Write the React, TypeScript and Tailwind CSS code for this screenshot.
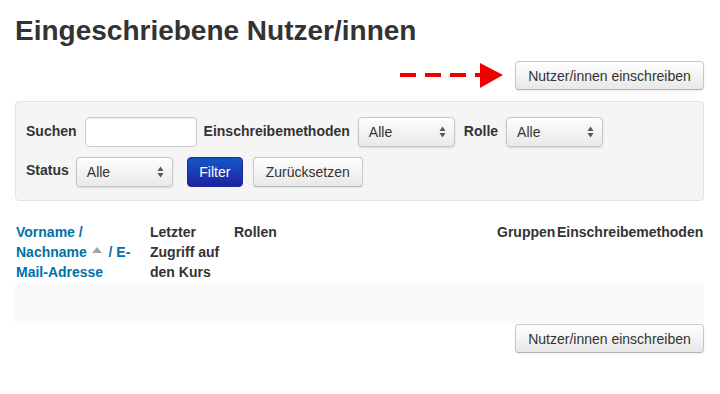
import React from "react";

function Btn({ children, className = "" }: { children: React.ReactNode; className?: string }) {
  return (
    <div
      className={
        "flex items-center justify-center rounded-[4px] border border-[#c8c8c8] border-b-[#b3b3b3] bg-gradient-to-b from-[#ffffff] to-[#e8e8e8] px-[12px] text-[14px] leading-[20px] text-[#333] shadow-[0_1px_2px_rgba(0,0,0,0.08)] " +
        className
      }
    >
      {children}
    </div>
  );
}

function Select({ className = "" }: { className?: string }) {
  return (
    <div
      className={
        "flex h-[30px] w-[97px] items-center justify-between rounded-[4px] border border-[#c6c6c6] bg-gradient-to-b from-[#fdfdfd] to-[#e9e9e9] pl-[10px] pr-[8px] text-[14px] text-[#333] shadow-[0_1px_2px_rgba(0,0,0,0.12)] " +
        className
      }
    >
      <span>Alle</span>
      <svg width="7" height="12" viewBox="0 0 7 12">
        <path d="M3.5 0.5 L6.5 5 L0.5 5 Z" fill="#555" />
        <path d="M3.5 11.5 L6.5 7 L0.5 7 Z" fill="#555" />
      </svg>
    </div>
  );
}

function Arrow() {
  return (
    <svg width="106" height="28" viewBox="0 0 106 28">
      <rect x="1" y="11" width="16" height="4" fill="#ee0000" />
      <rect x="26" y="11" width="16" height="4" fill="#ee0000" />
      <rect x="51" y="11" width="16" height="4" fill="#ee0000" />
      <rect x="76" y="11" width="8" height="4" fill="#ee0000" />
      <path d="M81 1 L104 13 L81 26 Z" fill="#ee0000" />
    </svg>
  );
}

export default function App() {
  return (
    <div className="min-h-[394px] w-[720px] bg-white pl-[15px] pr-[16px] text-[14px] leading-[20px] text-[#333] [font-family:'Liberation_Sans',Arial,sans-serif]">
      <h2 className="mt-[11px] text-[28px] font-bold leading-[40px] text-[#333]">
        Eingeschriebene Nutzer/innen
      </h2>

      <div className="mt-[10px] flex items-center justify-end gap-[10px]">
        <Arrow />
        <Btn className="h-[29px] w-[189px]">Nutzer/innen einschreiben</Btn>
      </div>

      <div className="mt-[11px] rounded-[4px] border border-[#e3e3e3] bg-[#f5f5f5] pb-[13px] pl-[10px] pt-[15px]">
        <div className="flex items-center">
          <span className="mb-[2px] mr-[8px] font-bold">Suchen</span>
          <div className="mr-[7px] h-[30px] w-[112px] rounded-[4px] border border-[#cccccc] bg-white shadow-[inset_0_1px_1px_rgba(0,0,0,0.075)]" />
          <span className="mb-[2px] mr-[8px] font-bold">Einschreibemethoden</span>
          <Select className="mr-[9px]" />
          <span className="mb-[2px] mr-[8px] font-bold">Rolle</span>
          <Select />
        </div>
        <div className="mt-[10px] flex items-center">
          <span className="mb-[4px] mr-[7px] font-bold">Status</span>
          <Select className="mr-[14px]" />
          <div className="mr-[10px] flex h-[30px] w-[56px] items-center justify-center rounded-[4px] border border-[#1c2a95] bg-gradient-to-b from-[#1256c8] to-[#1d1fa0] text-white">
            Filter
          </div>
          <Btn className="h-[30px] w-[110px]">Zurücksetzen</Btn>
        </div>
      </div>

      <div className="mt-[21px] grid grid-cols-[134px_84px_263px_60px_148px] font-bold">
        <div className="pl-[1px] text-[#0070a8]">
          Vorname /<br />
          Nachname{" "}
          <svg width="10" height="6" viewBox="0 0 10 6" className="mb-[6px] ml-[1px] mr-[3px] inline-block">
            <path d="M0 6 L5 0 L10 6 Z" fill="#a6a6a6" />
          </svg>
          {" "}/ E-
          <br />
          Mail-Adresse
        </div>
        <div className="pl-[1px]">
          Letzter
          <br />
          Zugriff auf
          <br />
          den Kurs
        </div>
        <div className="pl-[1px]">Rollen</div>
        <div className="pl-[1px]">Gruppen</div>
        <div className="pl-[1px]">Einschreibemethoden</div>
      </div>
      <div className="mt-[1px] h-[40px] bg-[#f9f9f9]" />

      <div className="mt-[1px] flex justify-end">
        <Btn className="h-[29px] w-[189px]">Nutzer/innen einschreiben</Btn>
      </div>
    </div>
  );
}
